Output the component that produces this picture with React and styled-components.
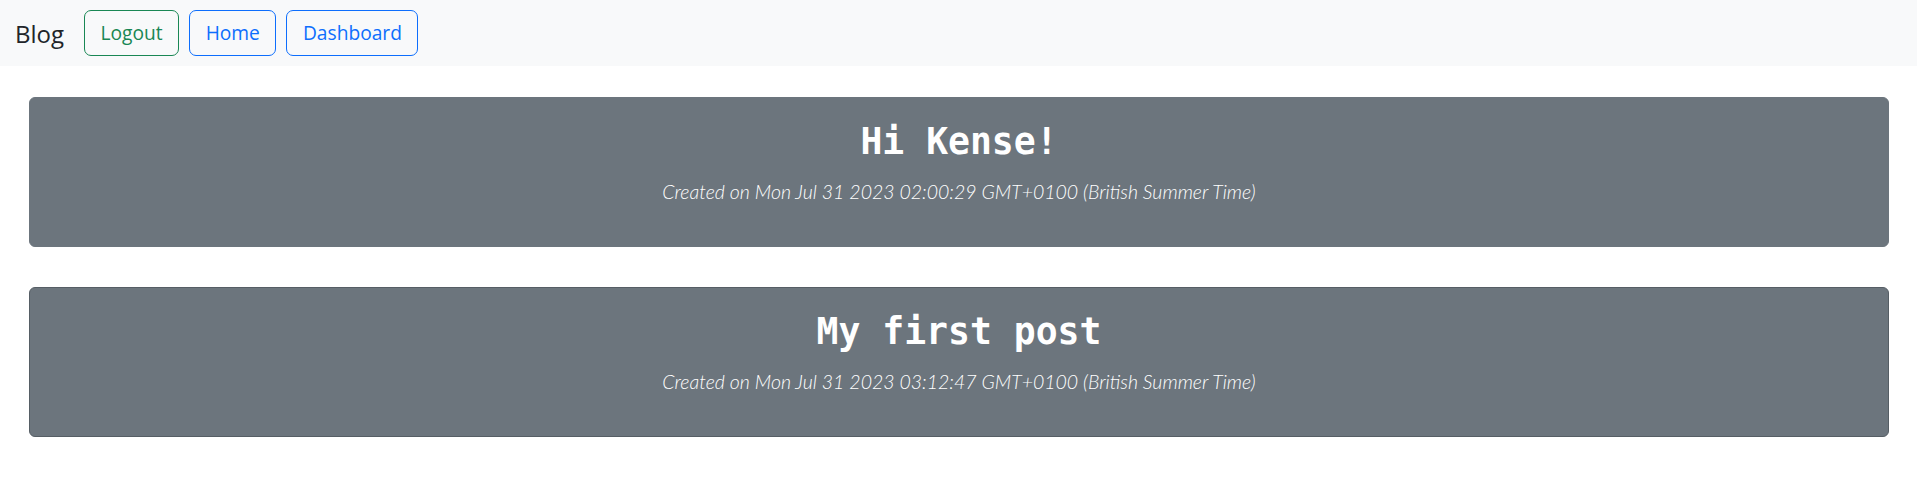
import React from "react";
import styled, { createGlobalStyle } from "styled-components";

const Global = createGlobalStyle`
  html, body { margin: 0; padding: 0; background: #fff; }
  body { font-family: "Open Sans", "Noto Sans", sans-serif; color: #212529; }
  * { box-sizing: border-box; }
`;

const Nav = styled.nav`
  display: flex;
  align-items: center;
  height: 66px;
  padding: 0 15px;
  background: #f8f9fa;
`;

const Brand = styled.a`
  font-family: "Open Sans", sans-serif;
  font-size: 24px;
  color: #212529;
  text-decoration: none;
  margin-right: 20px;
  line-height: 1;
  margin-top: 1px;
`;

const Buttons = styled.div`
  display: flex;
  gap: 10px;
`;

const Btn = styled.button`
  height: 46px;
  padding: 0 15.5px;
  border: 1px solid ${(p) => p.$color};
  color: ${(p) => p.$color};
  background: transparent;
  border-radius: 7px;
  font-family: "Open Sans", sans-serif;
  font-size: 19.2px;
  line-height: 1;
  cursor: pointer;
`;

const Main = styled.main`
  display: flex;
  flex-direction: column;
  gap: 40px;
  padding: 31px 28px 0 29px;
`;

const Card = styled.div`
  height: 150px;
  background: #6c757d;
  border: 1px solid ${(p) => (p.$outlined ? "#565e65" : "#6c757d")};
  border-radius: 6px;
  display: flex;
  flex-direction: column;
  align-items: center;
  padding-top: 21px;
  color: #fff;
`;

const Title = styled.h2`
  margin: 0;
  font-family: "DejaVu Sans Mono", "Liberation Mono", monospace;
  font-weight: bold;
  font-size: 36.4px;
  line-height: 46px;
`;

const Meta = styled.p`
  margin: 13px 0 0;
  font-family: "Lato", sans-serif;
  font-weight: 300;
  font-style: italic;
  font-size: 19.5px;
  line-height: 28px;
  color: #fff;
`;

const posts = [
  { title: "Hi Kense!", date: "Mon Jul 31 2023 02:00:29 GMT+0100 (British Summer Time)" },
  { title: "My first post", date: "Mon Jul 31 2023 03:12:47 GMT+0100 (British Summer Time)", outlined: true },
];

export default function App() {
  return (
    <>
      <Global />
      <Nav>
        <Brand href="#">Blog</Brand>
        <Buttons>
          <Btn $color="#198754">Logout</Btn>
          <Btn $color="#0d6efd">Home</Btn>
          <Btn $color="#0d6efd">Dashboard</Btn>
        </Buttons>
      </Nav>
      <Main>
        {posts.map((p) => (
          <Card key={p.title} $outlined={p.outlined}>
            <Title>{p.title}</Title>
            <Meta>Created on {p.date}</Meta>
          </Card>
        ))}
      </Main>
    </>
  );
}
